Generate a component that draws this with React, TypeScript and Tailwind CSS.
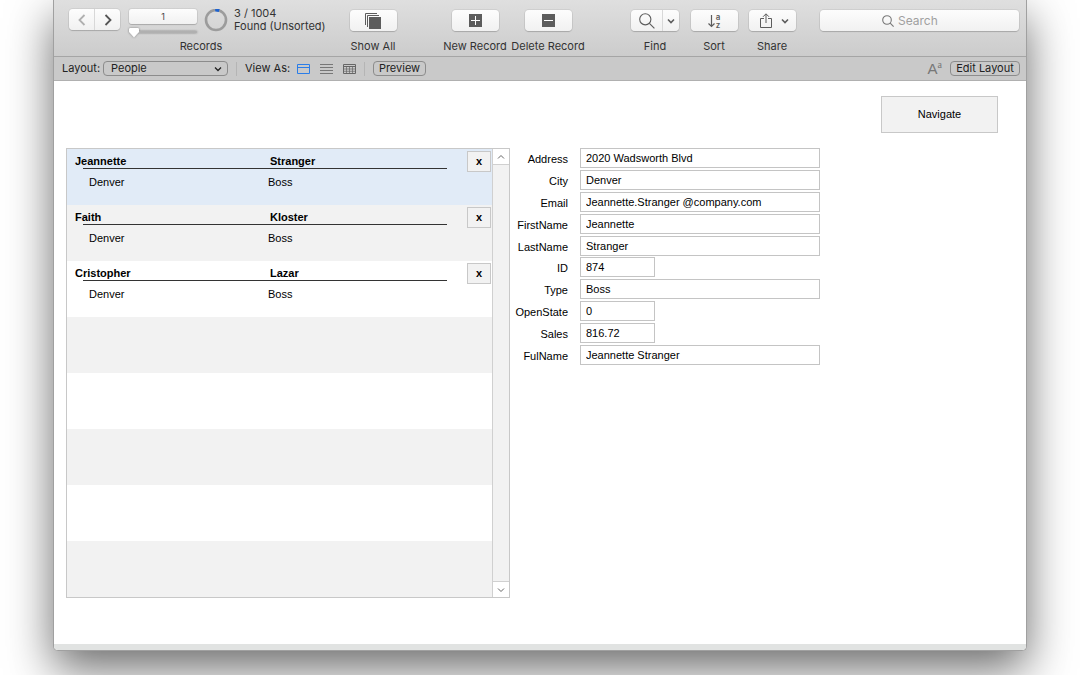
import type { ReactNode } from "react";

const people = [
  { first: "Jeannette", last: "Stranger", city: "Denver", type: "Boss" },
  { first: "Faith", last: "Kloster", city: "Denver", type: "Boss" },
  { first: "Cristopher", last: "Lazar", city: "Denver", type: "Boss" },
];

const rowColors = [
  "bg-[#e1ebf7]",
  "bg-[#f2f2f2]",
  "bg-white",
  "bg-[#f2f2f2]",
  "bg-white",
  "bg-[#f2f2f2]",
  "bg-white",
  "bg-[#f2f2f2]",
];

const fields = [
  { label: "Address", value: "2020 Wadsworth Blvd" },
  { label: "City", value: "Denver" },
  { label: "Email", value: "Jeannette.Stranger @company.com" },
  { label: "FirstName", value: "Jeannette" },
  { label: "LastName", value: "Stranger" },
  { label: "ID", value: "874", short: true },
  { label: "Type", value: "Boss" },
  { label: "OpenState", value: "0", short: true },
  { label: "Sales", value: "816.72", short: true },
  { label: "FulName", value: "Jeannette Stranger" },
];

const face =
  "bg-linear-to-b from-[#fdfdfd] to-[#f1f1f1] shadow-[0_0_0_1px_rgba(0,0,0,0.06),0_1px_1px_rgba(0,0,0,0.16)]";

function Chevron({ className, d, width = 1.6 }: { className?: string; d: string; width?: number }) {
  return (
    <svg className={className} width="8" height="8" viewBox="0 0 8 8" fill="none" stroke="currentColor" strokeWidth={width}>
      <path d={d} />
    </svg>
  );
}

const DOWN = "M1 2.5 4 5.5 7 2.5";
const UP = "M1 5.5 4 2.5 7 5.5";

function Tool({ label, className, children }: { label: string; className: string; children: ReactNode }) {
  return (
    <div className={`flex shrink-0 flex-col items-center ${className}`}>
      <div className="flex h-[31px] items-end">{children}</div>
      <div className="mt-2 leading-[14px] whitespace-nowrap">{label}</div>
    </div>
  );
}

function ToolButton({ label, children }: { label: string; children: ReactNode }) {
  return (
    <button aria-label={label} className={`flex h-[21px] w-[47px] items-center justify-center rounded-[4px] text-[#5c5c5c] ${face}`}>
      {children}
    </button>
  );
}

function Toolbar() {
  return (
    <header className="flex h-[57px] items-start border-b border-[#a5a5a5] bg-linear-to-b from-[#dfdfdf] to-[#cccccc] pr-[7px] pl-[15px] text-[#333]">
      <div className="w-[264px] shrink-0">
        <div className="flex h-[39px] pt-[9px]">
          <div className={`flex h-[21px] w-[51px] rounded-[4px] ${face}`}>
            <button aria-label="Previous record" className="flex flex-1 items-center justify-center border-r border-[#d8d8d8] text-[#b0b0b0]">
              <svg width="10" height="12" viewBox="0 0 10 12" fill="none" stroke="currentColor" strokeWidth="1.8">
                <path d="M7.5 1 2.5 6l5 5" />
              </svg>
            </button>
            <button aria-label="Next record" className="flex flex-1 items-center justify-center text-[#555]">
              <svg width="10" height="12" viewBox="0 0 10 12" fill="none" stroke="currentColor" strokeWidth="1.8">
                <path d="m2.5 1 5 5-5 5" />
              </svg>
            </button>
          </div>
          <div className="ml-[9px] flex w-[68px] flex-col">
            <input aria-label="Record number" defaultValue="1" className={`h-[15px] w-full rounded-[3px] text-center text-[9px] text-[#444] ${face}`} />
            <input
              type="range"
              aria-label="Record position"
              min={1}
              max={3}
              defaultValue={1}
              className="mt-[2px] h-[11px] w-full appearance-none bg-transparent drop-shadow-[0_0_1px_rgba(0,0,0,0.4)] [&::-webkit-slider-runnable-track]:h-[2px] [&::-webkit-slider-runnable-track]:rounded-full [&::-webkit-slider-runnable-track]:bg-[#b0b0b0] [&::-webkit-slider-thumb]:-mt-[3px] [&::-webkit-slider-thumb]:h-[10px] [&::-webkit-slider-thumb]:w-[10px] [&::-webkit-slider-thumb]:appearance-none [&::-webkit-slider-thumb]:bg-white [&::-webkit-slider-thumb]:[clip-path:polygon(10%_0,90%_0,100%_15%,100%_45%,50%_100%,0_45%,0_15%)]"
            />
          </div>
          <svg className="ml-[7px]" width="24" height="24" viewBox="0 0 24 24" fill="none">
            <circle cx="12" cy="11" r="10" stroke="#9c9c9c" strokeWidth="2.6" />
            <path d="M11.2 1a10 10 0 0 1 4 .5" stroke="#1c62d1" strokeWidth="3" />
          </svg>
          <div className="ml-[6px] leading-[13px] whitespace-nowrap">
            <div className="-mt-[2px]">3 / 1004</div>
            <div>Found (Unsorted)</div>
          </div>
        </div>
        <div className="text-center leading-[14px]">Records</div>
      </div>
      <Tool label="Show All" className="ml-4 w-12">
        <ToolButton label="Show All">
          <svg width="16" height="16" viewBox="0 0 16 16" fill="none" stroke="currentColor">
            <path d="M.5 12V.5H12M2.5 14V2.5H14" />
            <path d="M4 4h12v12H4z" fill="currentColor" stroke="none" />
          </svg>
        </ToolButton>
      </Tool>
      <div className="flex-1" />
      <Tool label="New Record" className="w-[60px]">
        <ToolButton label="New Record">
          <svg width="13" height="13" viewBox="0 0 13 13">
            <path d="M0 0h13v13H0z" fill="currentColor" />
            <path d="M2 6.5h9M6.5 2v9" stroke="#fff" />
          </svg>
        </ToolButton>
      </Tool>
      <Tool label="Delete Record" className="ml-2 w-[70px]">
        <ToolButton label="Delete Record">
          <svg width="13" height="13" viewBox="0 0 13 13">
            <path d="M0 0h13v13H0z" fill="currentColor" />
            <path d="M2 6.5h9" stroke="#fff" />
          </svg>
        </ToolButton>
      </Tool>
      <div className="flex-1" />
      <Tool label="Find" className="w-12">
        <div className={`flex h-[21px] w-12 rounded-[4px] text-[#5c5c5c] ${face}`}>
          <button aria-label="Find" className="flex w-8 items-center justify-center border-r border-[#d8d8d8]">
            <svg width="16" height="16" viewBox="0 0 16 16" fill="none" stroke="currentColor" strokeWidth="1.1">
              <circle cx="6.3" cy="6.3" r="5.6" />
              <path d="m10.4 10.4 5 5" />
            </svg>
          </button>
          <button aria-label="Find options" className="flex flex-1 items-center justify-center">
            <Chevron d={DOWN} />
          </button>
        </div>
      </Tool>
      <Tool label="Sort" className="ml-[11px] w-12">
        <ToolButton label="Sort">
          <span className="flex items-center gap-px">
            <svg width="7" height="14" viewBox="0 0 7 14" fill="none" stroke="currentColor" strokeWidth="1.2">
              <path d="M3.500 1v11.500M.5 9.500l3 3 3-3" />
            </svg>
            <span className="flex flex-col text-[8px] leading-[8px] font-semibold">
              <span>a</span>
              <span>z</span>
            </span>
          </span>
        </ToolButton>
      </Tool>
      <Tool label="Share" className="ml-[10px] w-12">
        <ToolButton label="Share">
          <svg className="mr-[9px] -mt-px ml-1" width="12" height="15" viewBox="0 0 12 15" fill="none" stroke="currentColor">
            <path d="M4 5.500H.5v9h11v-9H8M6 10V1M3 3.800 6 .8l3 3" />
          </svg>
          <Chevron d={DOWN} />
        </ToolButton>
      </Tool>
      <label className={`mt-[10px] ml-6 flex h-[21px] w-[199px] shrink-0 items-center rounded-[4px] pl-[62px] text-[#777] ${face}`}>
        <svg className="shrink-0" width="12" height="12" viewBox="0 0 12 12" fill="none" stroke="currentColor" strokeWidth="1.1">
          <circle cx="5" cy="5" r="4.300" />
          <path d="m8.200 8.200 3.400 3.400" />
        </svg>
        <input aria-label="Search" placeholder="Search" className="ml-1 w-full min-w-0 bg-transparent text-[12px] outline-none placeholder:text-[#a0a0a0]" />
      </label>
    </header>
  );
}

function LayoutBar() {
  return (
    <div className="flex h-6 items-center border-b border-[#b0b0b0] bg-[#c9c9c9] pr-[6px] pl-2 text-[#222]">
      <label htmlFor="layout" className="w-[41px] whitespace-nowrap">Layout:</label>
      <div className="grid items-center">
        <select id="layout" className="col-start-1 row-start-1 h-[15px] w-[125px] appearance-none rounded-[4px] border border-[#8c8c8c] pl-[7px] leading-[13px]">
          <option>People</option>
        </select>
        <Chevron d={DOWN} width={1.3} className="pointer-events-none col-start-1 row-start-1 mr-[6px] justify-self-end" />
      </div>
      <div className="ml-2 h-[14px] w-px bg-[#b5b5b5]" />
      <span className="ml-2 w-[52px] whitespace-nowrap">View As:</span>
      <button aria-label="Form view" className="text-[#2a7de8]">
        <svg width="13" height="10" viewBox="0 0 13 10" fill="none" stroke="currentColor">
          <path d="M.5.5h12v9H.5zM.5 3.500h12" />
        </svg>
      </button>
      <button aria-label="List view" className="ml-[10px] text-[#777]">
        <svg width="13" height="10" viewBox="0 0 13 10" stroke="currentColor">
          <path d="M0 .5h13M0 3.500h13M0 6.500h13M0 9.500h13" />
        </svg>
      </button>
      <button aria-label="Table view" className="ml-[10px] text-[#666]">
        <svg width="13" height="10" viewBox="0 0 13 10" fill="none" stroke="currentColor">
          <path d="M.5.5h12v9H.5zM.5 2.500h12" />
          <path d="M.5 5h12M.5 7.300h12M3.500 3v6.500M6.500 3v6.500M9.500 3v6.500" strokeWidth=".7" />
        </svg>
      </button>
      <div className="ml-2 h-[14px] w-px bg-[#b5b5b5]" />
      <button className="ml-2 h-[15px] w-[53px] rounded-[4px] border border-[#8c8c8c] leading-[13px]">Preview</button>
      <button aria-label="Text formatting" className="mr-2 ml-auto flex items-start font-['Liberation_Sans',sans-serif] text-[15px] leading-[15px] text-[#777]">
        A<span className="font-['Liberation_Serif',serif] text-[10px] leading-[8px]">a</span>
      </button>
      <button className="h-[15px] w-[70px] rounded-[4px] border border-[#8c8c8c] leading-[13px] whitespace-nowrap">Edit Layout</button>
    </div>
  );
}

function PeopleList() {
  return (
    <section aria-label="People" className="flex w-[444px] shrink-0 border border-[#c8c8c8]">
      <ul className="flex-1">
        {rowColors.map((color, i) => {
          const person = people[i];
          return (
            <li key={i} className={`flex h-14 items-start ${color}`}>
              {person && (
                <>
                  <div className="flex-1 pt-[5px] pl-2 leading-[14px]">
                    <div className="flex font-bold">
                      <span className="w-[195px]">{person.first}</span>
                      <span>{person.last}</span>
                    </div>
                    <div className="mr-5 ml-2 h-px bg-[#333]" />
                    <div className="flex pt-[6px] pl-[14px]">
                      <span className="w-[179px]">{person.city}</span>
                      <span>{person.type}</span>
                    </div>
                  </div>
                  <button aria-label={`Remove ${person.first}`} className="mt-[2px] mr-px h-[21px] w-6 border border-[#c8c8c8] bg-[#f2f2f2] font-bold leading-[19px]">
                    x
                  </button>
                </>
              )}
            </li>
          );
        })}
      </ul>
      <div className="flex w-[17px] flex-col justify-between border-l border-[#d0d0d0] bg-[#f2f2f2] text-[#666]">
        <button aria-label="Scroll up" className="flex h-4 items-center justify-center border-b border-[#d0d0d0] bg-white">
          <Chevron d={UP} width={1} />
        </button>
        <button aria-label="Scroll down" className="flex h-4 items-center justify-center border-t border-[#d0d0d0] bg-white">
          <Chevron d={DOWN} width={1} />
        </button>
      </div>
    </section>
  );
}

function RecordForm() {
  return (
    <form className="ml-[2px] flex h-[217px] flex-col justify-between">
      {fields.map(({ label, value, short }) => (
        <div key={label} className="flex h-5 items-center gap-3">
          <label htmlFor={label} className="w-14 pt-[2px] text-right leading-[18px]">
            {label}
          </label>
          <input
            id={label}
            defaultValue={value}
            className={`h-5 border border-[#c4c4c4] bg-white pl-[5px] ${short ? "w-[75px]" : "w-60"}`}
          />
        </div>
      ))}
    </form>
  );
}

export default function App() {
  return (
    <div className="min-h-screen overflow-hidden bg-white px-[53px] pb-[25px]">
      <div className="rounded-b-[5px] border-x border-b border-[#a0a0a0] bg-white font-['Inter',sans-serif] text-[11px] shadow-[0_18px_46px_rgba(0,0,0,0.58)]">
        <Toolbar />
        <LayoutBar />
        <main className="px-3 pt-[15px] pb-[46px] font-['Liberation_Sans',Arial,sans-serif] text-[11px] text-black">
          <div className="flex justify-end pr-4">
            <button className="h-[37px] w-[117px] border border-[#c8c8c8] bg-[#f2f2f2]">Navigate</button>
          </div>
          <div className="mt-[15px] flex items-start">
            <PeopleList />
            <RecordForm />
          </div>
        </main>
        <div className="h-[6px] rounded-b-[4px] bg-[#e1e3e2]" />
      </div>
    </div>
  );
}
